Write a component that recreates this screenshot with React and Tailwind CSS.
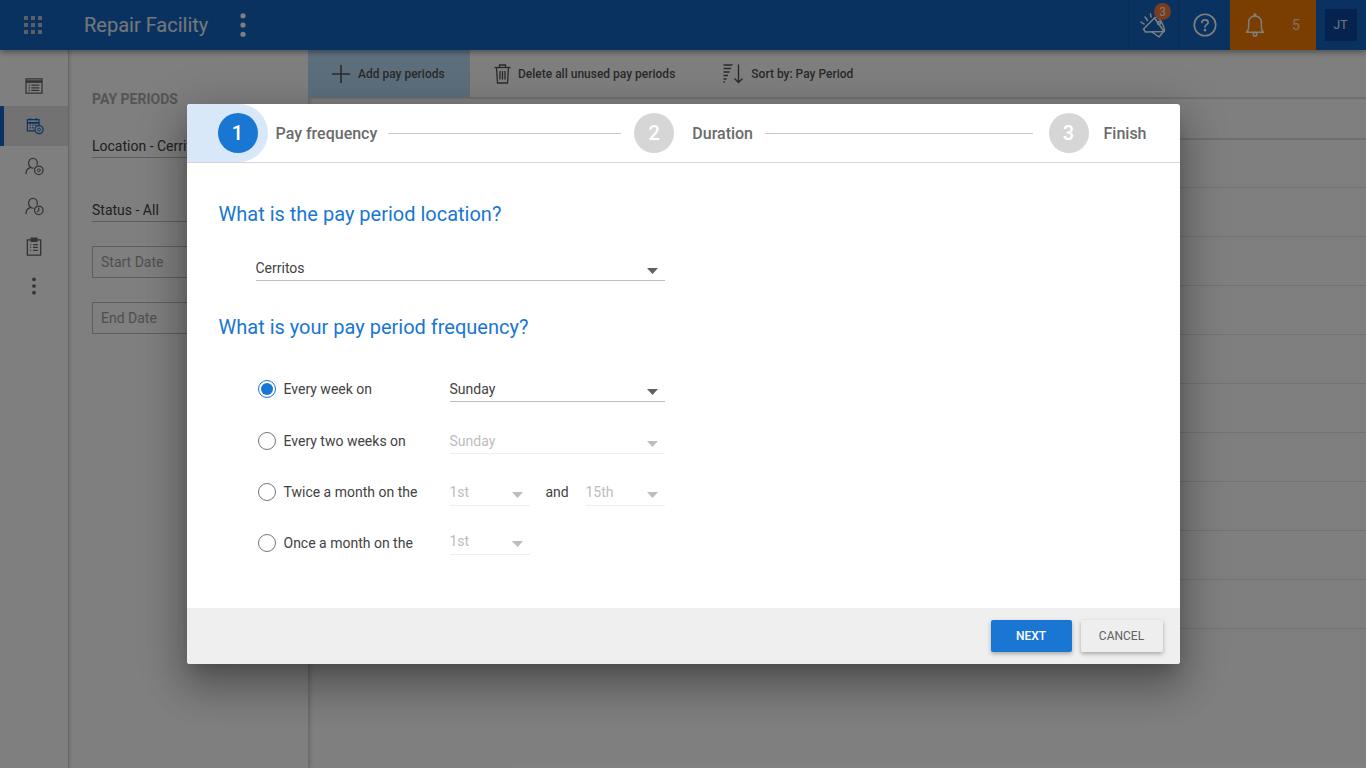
import React from "react";

const Dots = ({ className, w = 6, h = 26 }) => (
  <svg className={className} width={w} height={h} viewBox="0 0 6 26" fill="currentColor">
    <circle cx="3" cy="3" r="2.8" /><circle cx="3" cy="13" r="2.8" /><circle cx="3" cy="23" r="2.8" />
  </svg>
);

const Apps = () => (
  <svg width="18" height="18" viewBox="0 0 18 18" fill="#b9c0c8">
    {[0, 7, 14].map((y) => [0, 7, 14].map((x) => <rect key={`${x}-${y}`} x={x} y={y} width="4" height="4" />))}
  </svg>
);

const Megaphone = () => (
  <svg width="28" height="28" viewBox="0 0 28 28" fill="none" stroke="#ffffff" strokeWidth="1.5" strokeLinejoin="round" strokeLinecap="round">
    <path d="M3.5 17 L14.5 6 L24 19.5 L5.5 20 Z" />
    <path d="M12 20 L19 25 L23 20" />
    <path d="M14.5 6 C17 4 20 7 22 11 C24 15 25 18 24 19.5" />
    <circle cx="19" cy="11" r="1.5" />
    <path d="M1 10 L4 12 M5 5 L7.5 8.5 M10.5 2 L11 5" />
  </svg>
);

const Help = () => (
  <svg width="24" height="24" viewBox="0 0 26 26" fill="none" stroke="#ffffff" strokeWidth="1.8" strokeLinecap="round">
    <circle cx="13" cy="13" r="11.6" />
    <path d="M9.6 10.4 C9.6 8.4 11.2 7.4 13 7.4 C15 7.4 16.4 8.6 16.4 10.2 C16.4 12.6 13 12.8 13 15.4" />
    <circle cx="13" cy="18.6" r="0.6" fill="#ffffff" />
  </svg>
);

const Bell = () => (
  <svg width="20" height="24" viewBox="0 0 22 26" fill="none" stroke="#ffffff" strokeWidth="1.6" strokeLinejoin="round">
    <path d="M1.5 21 C3.5 19.5 4 17.5 4 14 V10 C4 6 7 3 11 3 C15 3 18 6 18 10 V14 C18 17.5 18.5 19.5 20.5 21 Z" />
    <circle cx="11" cy="2" r="1" />
    <circle cx="11" cy="23.2" r="2" />
  </svg>
);

const ListWindow = () => (
  <svg width="18" height="16" viewBox="0 0 20 18" fill="none" stroke="#666" strokeWidth="1.4">
    <rect x="1" y="1" width="18" height="16" />
    <path d="M1 4 H19" strokeWidth="3" />
    <path d="M4 8 H5.5 M7 8 H16 M4 11 H5.5 M7 11 H16 M4 14 H5.5 M7 14 H16" />
  </svg>
);

const CalendarMoney = () => (
  <svg className="ml-[2px]" width="18" height="18" viewBox="0 0 20 20" fill="none" stroke="#1565c0" strokeWidth="1.3">
    <path d="M10 15.5 H1.5 V3 H14.5 V9" />
    <path d="M1.5 6.5 H14.5" strokeWidth="2" />
    <path d="M4.5 1 V4 M11.5 1 V4" />
    <path d="M4 9 H5.5 M7 9 H8.5 M10 9 H11.5 M4 12 H5.5 M7 12 H8.5" strokeWidth="1.6" />
    <circle cx="14.5" cy="14" r="4.5" />
    <circle cx="14.5" cy="14" r="1.6" strokeWidth="1" />
  </svg>
);

const PersonMoney = ({ clock }) => (
  <svg width="19" height="19" viewBox="0 0 20 20" fill="none" stroke="#666" strokeWidth="1.3" strokeLinecap="round">
    <path d="M1 17.5 C1 14 3 12 6 11 C4.5 10 3.8 8.5 3.8 6.5 C3.8 3.5 5.8 1.4 8.4 1.4 C11 1.4 13 3.5 13 6.5 L12.6 8" />
    <path d="M6 11 C6.8 11.5 7.5 11.7 8.5 11.7" />
    <circle cx="14.5" cy="14" r="4.5" />
    {clock ? <path d="M14.5 11.5 V14.2 L12.8 15.4" /> : <circle cx="14.5" cy="14" r="1.5" strokeWidth="1" />}
  </svg>
);

const Clipboard = () => (
  <svg width="16" height="19" viewBox="0 0 16 20" fill="none" stroke="#666" strokeWidth="1.4">
    <path d="M5 3 H1 V19 H15 V3 H11" />
    <rect x="5" y="1.2" width="6" height="3.4" fill="#666" />
    <path d="M4 8 H5 M7 8 H12 M4 11 H5 M7 11 H12 M4 14 H5 M7 14 H12" />
  </svg>
);

const Trash = () => (
  <svg width="17" height="20" viewBox="0 0 17 20" fill="none" stroke="#555" strokeWidth="1.3">
    <path d="M0.5 3.5 H16.5" />
    <path d="M5.5 3.5 V1 H11.5 V3.5" />
    <path d="M2.5 3.5 L3.5 19 H13.5 L14.5 3.5" />
    <path d="M6 7 V15.5 M8.5 7 V15.5 M11 7 V15.5" />
  </svg>
);

const Sort = () => (
  <svg width="22" height="20" viewBox="0 0 22 20" fill="none" stroke="#555" strokeWidth="1.4">
    <path d="M0.5 1 H9.5 M0.5 4.5 H8 M0.5 8 H6.5 M0.5 11.5 H5 M0.5 15 H3.5 M0.5 18 H2" />
    <path d="M15.5 0.5 V18.5 M11.5 14.5 L15.5 18.5 L19.5 14.5" />
  </svg>
);

const Plus = () => (
  <svg width="20" height="20" viewBox="0 0 20 20" stroke="#555" strokeWidth="1.6">
    <path d="M10 1 V19 M1 10 H19" />
  </svg>
);

const Select = ({ value, disabled, width, raised }) => (
  <div className={`${width} h-6 flex justify-between border-b ${disabled ? "border-[#eeeeee] text-[#bdbdbd]" : "border-[#bdbdbd] text-[#424242]"}`}>
    <span className={`text-sm leading-6 ${raised ? "-mt-[2px]" : "-mt-px"}`}>{value}</span>
    <svg className={`mr-[7px] ${raised ? "mt-[10px]" : "mt-[11px]"}`} width="11" height="6" viewBox="0 0 11 6" fill={disabled ? "#bdbdbd" : "#616161"}>
      <path d="M0 0 H11 L5.5 6 Z" />
    </svg>
  </div>
);

const Radio = ({ checked, label, className, dotClass = "mt-[2px]", labelClass = "-mt-px", children }) => (
  <div className={`flex items-start ${className}`}>
    <span className={`w-[18px] h-[18px] rounded-full border flex items-center justify-center ${dotClass} ${checked ? "border-[#1976d2]" : "border-[#757575]"}`}>
      {checked && <span className="w-3 h-3 rounded-full bg-[#1976d2]" />}
    </span>
    <span className={`ml-2 w-[166px] text-sm leading-6 text-[#424242] ${labelClass}`}>{label}</span>
    {children}
  </div>
);

const Step = ({ n, label, active, labelClass }) => (
  <div className="flex items-center shrink-0">
    <span className={`w-10 h-10 rounded-full flex items-center justify-center text-xl font-medium text-white ${active ? "bg-[#1976d2]" : "bg-[#d6d6d6]"}`}>{n}</span>
    <span className={`mt-[2px] text-base font-medium text-[#6b6b6b] ${labelClass}`}>{label}</span>
  </div>
);

const SideItem = ({ active, children }) => (
  <div className={`h-10 flex items-center justify-center ${active ? "bg-[#e4e4e4] border-l-4 border-[#1565c0] pr-1" : ""}`}>{children}</div>
);

export default function App() {
  return (
    <div className="relative h-screen w-full overflow-hidden bg-white font-['Roboto',sans-serif]">
      <header className="relative z-10 h-[50px] bg-[#1565c0] flex items-center shadow-[0_2px_6px_rgba(0,0,0,0.4)]">
        <div className="ml-6"><Apps /></div>
        <span className="ml-[42px] text-xl text-white/90">Repair Facility</span>
        <Dots className="ml-[32px] text-white" h={24} />
        <div className="ml-auto flex items-stretch h-full">
          <div className="relative w-[51px] border-x border-[#0f5aad] flex items-center justify-center">
            <div className="mt-[1px] ml-[1px]"><Megaphone /></div>
            <span className="absolute left-[25px] top-[3px] w-[17px] h-[17px] rounded-full bg-[#f4793a] text-xs text-white/90 flex items-center justify-center">3</span>
          </div>
          <div className="w-[51px] flex items-center justify-center"><Help /></div>
          <div className="w-[86px] bg-[#f57c00] flex items-center pl-[15px]">
            <Bell />
            <span className="ml-[27px] text-sm text-white/80">5</span>
          </div>
          <div className="w-[50px] flex items-center justify-center">
            <span className="w-8 h-8 mr-[1px] bg-[#0d47a1] text-xs text-white/90 flex items-center justify-center">JT</span>
          </div>
        </div>
      </header>

      <div className="flex h-[718px]">
        <aside className="w-[69px] shrink-0 pt-4 border-r border-[#d6d6d6] shadow-[1px_0_3px_rgba(0,0,0,0.15)]">
          <SideItem><ListWindow /></SideItem>
          <SideItem active><CalendarMoney /></SideItem>
          <SideItem><PersonMoney /></SideItem>
          <SideItem><PersonMoney clock /></SideItem>
          <SideItem><Clipboard /></SideItem>
          <SideItem><Dots className="text-[#666]" w={4} h={18} /></SideItem>
        </aside>

        <section className="w-[239px] shrink-0 px-[23px] pt-[41px] shadow-[2px_0_4px_rgba(0,0,0,0.2)]">
          <h2 className="text-sm leading-4 font-bold text-[#aaaaaa]">PAY PERIODS</h2>
          <div className="mt-[27px] h-[24px] border-b border-[#bdbdbd] text-sm leading-6 text-[#424242] whitespace-nowrap overflow-hidden">Location - Cerritos</div>
          <div className="mt-[40px] h-[24px] border-b border-[#bdbdbd] text-sm leading-6 text-[#424242]">Status - All</div>
          <div className="mt-[24px] h-[32px] border border-[#bdbdbd] px-2 text-sm leading-[30px] text-[#9e9e9e]">Start Date</div>
          <div className="mt-[24px] h-[32px] border border-[#bdbdbd] px-2 text-sm leading-[30px] text-[#9e9e9e]">End Date</div>
        </section>

        <main className="flex-1 min-w-0">
          <div className="h-[49px] border-b-2 border-[#e0e0e0] flex items-stretch text-xs font-medium text-[#555]">
            <div className="w-[162px] bg-[#bbdefb] flex items-center pl-[23px]">
              <Plus /><span className="ml-[7px]">Add pay periods</span>
            </div>
            <div className="ml-6 flex items-center">
              <Trash /><span className="ml-[7px]">Delete all unused pay periods</span>
            </div>
            <div className="ml-[48px] flex items-center">
              <Sort /><span className="ml-[6px]">Sort by: Pay Period</span>
            </div>
          </div>
          <div className="h-[41px] border-b-2 border-[#e0e0e0]" />
          <div className="h-[48px] border-b border-[#e6e6e6]" />
          {Array.from({ length: 9 }).map((_, i) => (
            <div key={i} className="h-[49px] border-b border-[#e6e6e6]" />
          ))}
        </main>
      </div>

      <div className="absolute inset-0 z-20 bg-black/50 flex items-center justify-center">
        <div className="w-[993px] h-[560px] bg-white rounded-[3px] overflow-hidden flex flex-col shadow-[0_11px_15px_-7px_rgba(0,0,0,0.2),0_24px_38px_3px_rgba(0,0,0,0.2),0_9px_46px_8px_rgba(0,0,0,0.16)]">
          <div className="h-[59px] shrink-0 border-b border-[#d6d6d6] flex items-center relative">
            <div className="absolute left-0 top-0 w-[81px] h-[58px] bg-[#d9e8f8] rounded-r-[29px]" />
            <div className="relative flex items-center w-full pl-[31px] pr-[33px]">
              <Step n="1" label="Pay frequency" active labelClass="ml-[18px]" />
              <div className="w-[233px] h-px bg-[#c8c8c8] ml-[11px] mr-[13px]" />
              <Step n="2" label="Duration" labelClass="ml-[18px]" />
              <div className="flex-1 h-px bg-[#c8c8c8] ml-3 mr-4" />
              <Step n="3" label="Finish" labelClass="ml-[15px]" />
            </div>
          </div>

          <div className="flex-1 pl-8 pt-[37px]">
            <h3 className="text-xl leading-7 text-[#1976d2]">What is the pay period location?</h3>
            <div className="ml-[37px] mt-[29px]">
              <Select value="Cerritos" width="w-[409px]" />
            </div>
            <h3 className="mt-[32px] text-xl leading-7 text-[#1976d2]">What is your pay period frequency?</h3>
            <div className="ml-[39px] mt-[37px]">
              <Radio checked label="Every week on"><Select value="Sunday" width="w-[215px]" /></Radio>
              <Radio label="Every two weeks on" className="mt-7"><Select value="Sunday" width="w-[215px]" disabled /></Radio>
              <Radio label="Twice a month on the" className="mt-7" dotClass="mt-[1px]" labelClass="-mt-[2px]">
                <Select value="1st" width="w-[80px]" disabled raised />
                <span className="ml-4 w-10 -mt-[2px] text-sm leading-6 text-[#424242]">and</span>
                <Select value="15th" width="w-[79px]" disabled raised />
              </Radio>
              <Radio label="Once a month on the" className="mt-[25px]" dotClass="mt-[3px]" labelClass="mt-0">
                <Select value="1st" width="w-[80px]" disabled raised />
              </Radio>
            </div>
          </div>

          <div className="h-14 shrink-0 bg-[#efefef] flex items-center justify-end gap-[9px] pr-[17px]">
            <button className="w-[81px] h-8 rounded-[2px] bg-[#1976d2] text-xs font-medium text-white shadow-[0_2px_4px_rgba(0,0,0,0.3)]">NEXT</button>
            <button className="w-[82px] h-8 rounded-[2px] bg-[#eeeeee] text-xs font-normal text-[#616161] shadow-[0_2px_4px_rgba(0,0,0,0.3)]">CANCEL</button>
          </div>
        </div>
      </div>
    </div>
  );
}
